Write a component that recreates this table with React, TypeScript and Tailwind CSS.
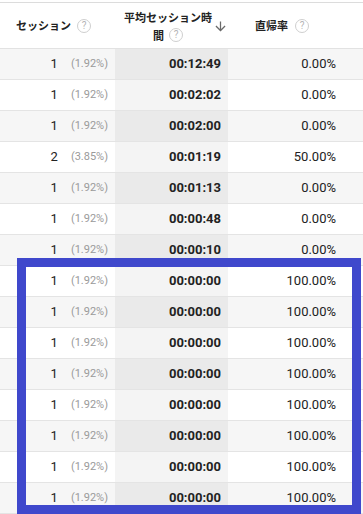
import React from "react";

type Row = {
  sessions: number;
  share: string;
  duration: string;
  bounce: string;
};

const rows: Row[] = [
  { sessions: 1, share: "(1.92%)", duration: "00:12:49", bounce: "0.00%" },
  { sessions: 1, share: "(1.92%)", duration: "00:02:02", bounce: "0.00%" },
  { sessions: 1, share: "(1.92%)", duration: "00:02:00", bounce: "0.00%" },
  { sessions: 2, share: "(3.85%)", duration: "00:01:19", bounce: "50.00%" },
  { sessions: 1, share: "(1.92%)", duration: "00:01:13", bounce: "0.00%" },
  { sessions: 1, share: "(1.92%)", duration: "00:00:48", bounce: "0.00%" },
  { sessions: 1, share: "(1.92%)", duration: "00:00:10", bounce: "0.00%" },
  ...Array.from({ length: 8 }, () => ({
    sessions: 1,
    share: "(1.92%)",
    duration: "00:00:00",
    bounce: "100.00%",
  })),
];

function HelpIcon() {
  return (
    <span className="inline-flex h-[14px] w-[14px] shrink-0 items-center justify-center rounded-full border border-[#cfcfcf] font-['Roboto',sans-serif] text-[10px] font-normal leading-none text-[#b5b5b5]">
      ?
    </span>
  );
}

function SortArrow() {
  return (
    <svg width="15" height="15" viewBox="0 0 24 24" className="shrink-0" fill="#6a6a6a">
      <path d="M20 12l-1.41-1.41L13 16.17V4h-2v12.17l-5.58-5.59L4 12l8 8 8-8z" />
    </svg>
  );
}

export default function App() {
  return (
    <div className="relative h-[514px] w-[363px] overflow-hidden bg-white">
      <div className="mt-[2px] border-t border-[#dcdcdc]">
        <div className="grid h-[46px] grid-cols-[115px_113px_1fr] border-b border-[#e2e2e2] font-['Noto_Sans_CJK_JP',sans-serif] text-[11px] font-bold text-[#222]">
          <div className="flex items-center justify-end gap-[6px] pr-[24px]">
            <span>セッション</span>
            <HelpIcon />
          </div>
          <div className="flex items-center pl-[6px]">
            <div className="w-[100px] text-center leading-[18px]">
              <div className="whitespace-nowrap">平均セッション時</div>
              <div className="flex items-center justify-center gap-[5px]">
                <span>間</span>
                <HelpIcon />
              </div>
            </div>
            <div className="ml-[-2px] mt-[2px]">
              <SortArrow />
            </div>
          </div>
          <div className="flex items-center gap-[7px] pl-[27px]">
            <span>直帰率</span>
            <HelpIcon />
          </div>
        </div>

        {rows.map((row, i) => {
          const shaded = i % 2 === 0;
          return (
            <div
              key={i}
              className={`grid h-[31px] grid-cols-[115px_113px_1fr] border-b border-[#e4e4e4] font-['Roboto',sans-serif] text-[13px] text-[#222] ${
                shaded ? "bg-[#f6f6f6]" : "bg-white"
              }`}
            >
              <div className="flex items-center justify-end gap-[13px] pr-[7px]">
                <span>{row.sessions}</span>
                <span className="text-[11px] text-[#9a9a9a]">{row.share}</span>
              </div>
              <div
                className={`flex items-center justify-end pr-[7px] font-bold ${
                  shaded ? "bg-[#eaeaea]" : "bg-[#f4f4f4]"
                }`}
              >
                {row.duration}
              </div>
              <div className="flex items-center justify-end pr-[27px]">{row.bounce}</div>
            </div>
          );
        })}
      </div>

      <div className="absolute left-[17px] top-[258px] h-[256px] w-[344px] border-[9px] border-[#3f48cc]" />
    </div>
  );
}
